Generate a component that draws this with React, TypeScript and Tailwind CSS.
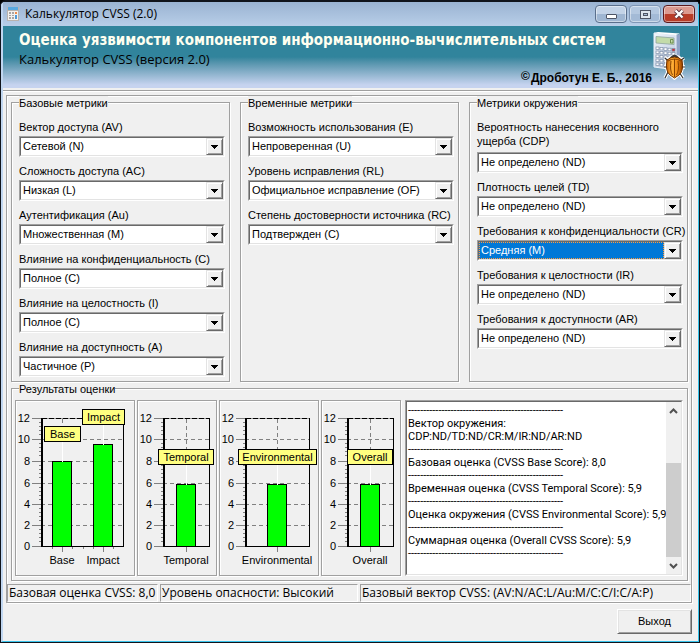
import React from 'react';

const groove = 'border border-[#a0a0a0] shadow-[1px_1px_0_#fff,inset_1px_1px_0_#fff]';
const sunken =
  'border border-t-[#a0a0a0] border-l-[#a0a0a0] border-r-white border-b-white';
const sunkenInner =
  'border border-t-[#696969] border-l-[#696969] border-r-[#e3e3e3] border-b-[#e3e3e3]';

type FieldProps = {
  id: string;
  label: string;
  value: string;
  focused?: boolean;
  tall?: boolean;
};

function Field({ id, label, value, focused, tall }: FieldProps) {
  return (
    <div className="flex flex-col">
      <label
        htmlFor={id}
        className={tall ? 'mb-1 leading-[14px]' : 'mb-0.5 whitespace-nowrap leading-[14px]'}
      >
        {label}
      </label>
      <div className={`relative ${sunken}`}>
        <div className={`flex bg-white ${sunkenInner}`}>
          <select
            id={id}
            defaultValue={value}
            className={`h-[17px] w-full appearance-none pr-5 leading-[15px] outline-none ${
              focused
                ? 'mr-[17px] border border-dotted border-[#ff9a3c] bg-[#0078d7] pl-px text-white'
                : 'bg-white pl-0.5 text-black'
            }`}
          >
            <option>{value}</option>
          </select>
        </div>
        <span className="pointer-events-none absolute top-px right-px flex h-[17px] w-[17px] items-center justify-center border border-t-[#e3e3e3] border-r-[#696969] border-b-[#696969] border-l-[#e3e3e3] bg-[#f0f0f0] shadow-[inset_1px_1px_0_#fff,inset_-1px_-1px_0_#a0a0a0]">
          <svg width="7" height="4" viewBox="0 0 7 4" shapeRendering="crispEdges">
            <path d="M0 0h7v1H0zM1 1h5v1H1zM2 2h3v1H2zM3 3h1v1H3z" />
          </svg>
        </span>
      </div>
    </div>
  );
}

function Group({
  title,
  className,
  children,
}: {
  title: string;
  className: string;
  children: React.ReactNode;
}) {
  return (
    <fieldset className={`min-w-0 ${groove} ${className}`}>
      <legend className="h-3 bg-[#f0f0f0] leading-[14px]">{title}</legend>
      {children}
    </fieldset>
  );
}

type Bar = { name: string; x: number; top: number; tagX: number; tagY: number; tagW: number };

const gridLines: [number, number][] = [
  [12, 418],
  [10, 439],
  [8, 461],
  [6, 483],
  [4, 504],
  [2, 525],
  [0, 546],
];

function Chart({
  left,
  width,
  axis,
  right,
  bars,
}: {
  left: number;
  width: number;
  axis: number;
  right: number;
  bars: Bar[];
}) {
  return (
    <div className={`shrink-0 ${groove}`}>
      <svg
        className="block"
        width={width}
        height="174"
        viewBox={`${left} 401 ${width} 174`}
        shapeRendering="crispEdges"
        fontSize="11"
      >
        {gridLines.map(([v, y]) => (
          <g key={v}>
            <path d={`M${axis - 9} ${y + 0.5}H${axis}`} stroke="#808080" />
            <path d={`M${axis} ${y + 0.5}H${right}`} stroke="#808080" strokeDasharray="4 3" />
            {v > 0 &&
              [4, 8, 12, 16].map((d) => (
                <path key={d} d={`M${axis - 2} ${y + d + 0.5}h2`} stroke="#808080" />
              ))}
            <text x={axis - 11} y={y + 4} textAnchor="end">
              {v}
            </text>
          </g>
        ))}
        {bars.map((b) => (
          <path
            key={b.name}
            d={`M${b.x + 10.5} 419V546`}
            stroke="#808080"
            strokeDasharray="4 3"
          />
        ))}
        <path d={`M${axis} 418.5H${right + 1}`} stroke="#000" />
        <path d={`M${axis + 6} 418.5H${right}`} stroke="#999" strokeDasharray="2 5" />
        <path d={`M${right + 0.5} 418V547`} stroke="#000" />
        <path d={`M${axis + 1} 418V547`} stroke="#000" strokeWidth="2" />
        <path d={`M${axis} 546.5H${right + 1}`} stroke="#000" />
        {bars.map((b) => (
          <g key={b.name}>
            <rect
              x={b.x + 0.5}
              y={b.top + 0.5}
              width="19"
              height={546 - b.top}
              fill="#0f0"
              stroke="#000"
            />
            <path d={`M${b.x + 10.5} 547v5`} stroke="#808080" />
            <path d={`M${b.x + 10.5} ${b.tagY + 15}V${b.top + 1}`} stroke="#fff" />
            <text x={b.x + 10} y="564" textAnchor="middle">
              {b.name}
            </text>
          </g>
        ))}
        {bars.length > 1 && (
          <path d="M52.500 547v2M72.500 547v2M83.500 547v2M93.500 547v2M113.500 547v2" stroke="#808080" />
        )}
        {bars.map((b) => (
          <g key={b.name}>
            <rect
              x={b.tagX + 0.5}
              y={b.tagY + 0.5}
              width={b.tagW - 1}
              height="15"
              fill="#ffff80"
              stroke="#000"
            />
            <text x={b.tagX + b.tagW / 2} y={b.tagY + 12} textAnchor="middle">
              {b.name}
            </text>
          </g>
        ))}
      </svg>
    </div>
  );
}

const rule = '-'.repeat(51);
const report = [
  rule,
  'Вектор окружения:',
  'CDP:ND/TD:ND/CR:M/IR:ND/AR:ND',
  rule,
  'Базовая оценка (CVSS Base Score): 8,0',
  rule,
  'Временная оценка (CVSS Temporal Score): 5,9',
  rule,
  'Оценка окружения (CVSS Environmental Score): 5,9',
  rule,
  'Суммарная оценка (Overall CVSS Score): 5,9',
  rule,
].join('\n');

function CalcIcon() {
  return (
    <svg width="12" height="14" viewBox="0 0 12 14" shapeRendering="crispEdges" aria-hidden="true">
      <rect x="0" y="0" width="12" height="14" fill="#b9b3ae" />
      <rect x="1" y="0" width="10" height="3" fill="#58a9e0" />
      <rect x="1" y="4" width="10" height="9" fill="#f4f1ee" />
      <path d="M2 5h2v2H2zM5 5h2v2H5zM2 8h2v1H2zM5 8h2v1H5zM2 10h2v2H2zM5 10h2v2H5z" fill="#a9a5a3" />
      <path d="M8 5h2v2H8z" fill="#ef8b4a" />
      <path d="M8 8h2v4H8z" fill="#4f9ad8" />
    </svg>
  );
}

function CalcBugIcon() {
  const keys: React.ReactNode[] = [];
  for (let r = 0; r < 5; r++) {
    for (let c = 0; c < 5; c++) {
      keys.push(
        <rect
          key={`${r}-${c}`}
          x={3 + c * 4}
          y={15 + r * 4 + c * 0.4}
          width="3"
          height="2.6"
          fill={r === 0 && c === 4 ? '#c8323c' : '#fff'}
          stroke="#7d8ea8"
          strokeWidth="0.7"
        />,
      );
    }
  }
  return (
    <svg width="34" height="48" viewBox="0 0 34 48" aria-hidden="true">
      <defs>
        <linearGradient id="bug" x1="0" x2="1">
          <stop offset="0" stopColor="#c45f00" />
          <stop offset="0.35" stopColor="#ffb13a" />
          <stop offset="0.7" stopColor="#ee8611" />
          <stop offset="1" stopColor="#8f3d00" />
        </linearGradient>
        <linearGradient id="body" x1="0" x2="0.6" y2="1">
          <stop offset="0" stopColor="#f3f7fc" />
          <stop offset="1" stopColor="#b9c8df" />
        </linearGradient>
      </defs>
      <path d="M23 3l4 -1v24l-4 10z" fill="#8fa3c6" />
      <path d="M1 1L23 3V38L1 35z" fill="url(#body)" stroke="#e9eff8" />
      <path d="M23 3l4 -1.500L5 0L1 1z" fill="#fff" />
      <path d="M3 4.500L21 6V12.500L3 11z" fill="#c3dba9" stroke="#8fa5a0" strokeWidth="0.8" />
      <path d="M17.500 7.500h2.500v3.500h-2.500z" fill="none" stroke="#5c7d3c" strokeWidth="0.8" />
      {keys}
      <g fill="none" stroke="#fff" strokeWidth="3.400">
        <path d="M15 29l-3 -3M27 29l4 -3M14 35h-3M28 35h4M15 40l-3 6M26 40l4 6" />
      </g>
      <path
        d="M14 27Q22 20 29 27Q32 39 26 43L21.500 47L17 43Q11 39 14 27z"
        fill="#fff"
        stroke="#fff"
        strokeWidth="2"
      />
      <g fill="none" stroke="#333" strokeWidth="1.200">
        <path d="M15 29l-3 -3M27 29l4 -3M14 35h-3M28 35h4M15 40l-3 6M26 40l4 6" />
      </g>
      <path d="M16.500 26q5 -7 10 0z" fill="#34383d" />
      <path d="M14 28Q21.500 22 29 28Q31 39 26 43L21.500 46L17 43Q12 39 14 28z" fill="url(#bug)" stroke="#6e3200" />
      <path
        d="M15 29Q21.500 25 28 29M21.500 27V45M18 29Q16.500 38 19.500 43M25 29Q26.500 38 23.500 43"
        fill="none"
        stroke="#8a4300"
      />
    </svg>
  );
}

const captionButton =
  'flex h-[18px] w-8 items-center justify-center rounded-sm border shadow-[inset_0_0_0_1px_rgba(255,255,255,0.45)]';

export default function App() {
  return (
    <div className="min-h-screen bg-black font-['Liberation_Sans',Arial,sans-serif] text-[11px] text-black">
      <div className="flex min-h-screen flex-col rounded-t-md border border-t-2 border-[#10141c] bg-[#b4cbe6]">
        <div className="flex grow flex-col rounded-t-sm border-r border-b border-l-2 border-r-[#38c4ec] border-b-[#38c4ec] border-l-[#c0d6f0]">
          <header className="flex h-6 items-center bg-linear-to-b from-[#9ab3d2] to-[#b8cee8] pr-[3px] pl-1">
            <CalcIcon />
            <h1 className="ml-1.5 grow font-['Open_Sans',sans-serif] text-xs">Калькулятор CVSS (2.0)</h1>
            <div className="flex gap-0.5">
              <button
                type="button"
                aria-label="Свернуть"
                className={`${captionButton} border-[#5a6f8c] bg-linear-to-b from-[#c3d3e7] from-50% to-[#9fb6d2] to-50%`}
              >
                <svg width="11" height="5" viewBox="0 0 11 5" className="mt-1">
                  <rect x="0.500" y="0.500" width="10" height="4" rx="0.500" fill="#fff" stroke="#4d5566" />
                </svg>
              </button>
              <button
                type="button"
                aria-label="Развернуть"
                className={`${captionButton} border-[#7f96b5] bg-linear-to-b from-[#b4c8e0] from-50% to-[#a3bad6] to-50%`}
              >
                <svg width="11" height="9" viewBox="0 0 11 9" shapeRendering="crispEdges">
                  <rect x="0.500" y="0.500" width="10" height="8" fill="#dde5ef" stroke="#4d5566" />
                  <rect x="3.500" y="3.500" width="4" height="2" fill="#a9bdd8" stroke="#4d5566" />
                </svg>
              </button>
              <button
                type="button"
                aria-label="Закрыть"
                className={`${captionButton} border-[#5b1a1e] bg-linear-to-b from-[#dc9a90] from-50% to-[#b83c28] to-50%`}
              >
                <svg width="12" height="10" viewBox="0 0 12 10">
                  <path d="M2.500 1.500L9.500 8.500M9.500 1.500L2.500 8.500" stroke="#5a3540" strokeWidth="4" />
                  <path d="M2.500 1.500L9.500 8.500M9.500 1.500L2.500 8.500" stroke="#fff" strokeWidth="2.400" />
                </svg>
              </button>
            </div>
          </header>

          <section className="flex h-[62px] bg-linear-to-b from-[#31849c] from-50% to-[#c6d3ef] to-95% pl-4">
            <div className="flex grow flex-col pt-1 font-['Open_Sans',sans-serif]">
              <h2 className="font-['DejaVu_Sans_Condensed','DejaVu_Sans',sans-serif] text-[15px] leading-5 font-bold whitespace-nowrap text-[#fffff0]">
                Оценка уязвимости компонентов информационно-вычислительных систем
              </h2>
              <p className="text-[13px] leading-[18px]">Калькулятор CVSS (версия 2.0)</p>
              <p className="mt-px flex items-start justify-end pr-px font-['Liberation_Sans',Arial,sans-serif] text-xs leading-[18px] font-bold">
                <span className="pr-px leading-[14px]">©</span>
                Дроботун Е. Б., 2016
              </p>
            </div>
            <div className="mr-[11px] pt-1.5">
              <CalcBugIcon />
            </div>
          </section>

          <main className="flex grow flex-col bg-[#f0f0f0]">
            <div className="mt-0.5 h-0.5 border-t border-[#a0a0a0] bg-white" />
            <div className={`mt-[3px] mr-1.5 ml-[3px] ${groove}`}>
              <div className="grid grid-cols-3 gap-2.5 pr-[3px] pl-1">
                <Group title="Базовые метрики" className="pt-3 pr-1 pb-1 pl-[7px]">
                  <div className="flex flex-col gap-[7px]">
                    <Field id="av" label="Вектор доступа (AV)" value="Сетевой (N)" />
                    <Field id="ac" label="Сложность доступа (AC)" value="Низкая (L)" />
                    <Field id="au" label="Аутентификация (Au)" value="Множественная (M)" />
                    <Field id="c" label="Влияние на конфиденциальность (C)" value="Полное (C)" />
                    <Field id="i" label="Влияние на целостность (I)" value="Полное (C)" />
                    <Field id="a" label="Влияние на доступность (A)" value="Частичное (P)" />
                  </div>
                </Group>
                <Group title="Временные метрики" className="pt-3 pr-1 pb-1 pl-[7px]">
                  <div className="flex flex-col gap-[7px]">
                    <Field id="e" label="Возможность использования (E)" value="Непроверенная (U)" />
                    <Field id="rl" label="Уровень исправления (RL)" value="Официальное исправление (OF)" />
                    <Field id="rc" label="Степень достоверности источника (RC)" value="Подтвержден (C)" />
                  </div>
                </Group>
                <Group title="Метрики окружения" className="pt-3 pr-1 pb-1 pl-[7px]">
                  <div className="flex flex-col gap-[7px]">
                    <Field
                      id="cdp"
                      label="Вероятность нанесения косвенного ущерба (CDP)"
                      value="Не определено (ND)"
                      tall
                    />
                    <Field id="td" label="Плотность целей (TD)" value="Не определено (ND)" />
                    <Field id="cr" label="Требования к конфиденциальности (CR)" value="Средняя (M)" focused />
                    <Field id="ir" label="Требования к целостности (IR)" value="Не определено (ND)" />
                    <Field id="ar" label="Требования к доступности (AR)" value="Не определено (ND)" />
                  </div>
                </Group>
              </div>

              <div className="pr-[3px] pl-1">
                <Group title="Результаты оценки" className="pt-1.5 pr-1 pb-1 pl-[7px]">
                  <div className="-ml-1 flex gap-0.5">
                    <Chart
                      left={16}
                      width={118}
                      axis={41}
                      right={123}
                      bars={[
                        { name: 'Base', x: 52, top: 461, tagX: 44, tagY: 426, tagW: 37 },
                        { name: 'Impact', x: 93, top: 444, tagX: 82, tagY: 409, tagW: 43 },
                      ]}
                    />
                    <Chart
                      left={138}
                      width={78}
                      axis={163}
                      right={209}
                      bars={[{ name: 'Temporal', x: 176, top: 484, tagX: 158, tagY: 449, tagW: 56 }]}
                    />
                    <Chart
                      left={220}
                      width={98}
                      axis={245}
                      right={309}
                      bars={[{ name: 'Environmental', x: 267, top: 484, tagX: 238, tagY: 449, tagW: 79 }]}
                    />
                    <Chart
                      left={322}
                      width={78}
                      axis={347}
                      right={393}
                      bars={[{ name: 'Overall', x: 360, top: 484, tagX: 347, tagY: 449, tagW: 46 }]}
                    />
                    <div className={`ml-0.5 flex min-w-0 grow ${sunken}`}>
                      <div className={`flex min-w-0 grow bg-white ${sunkenInner}`}>
                        <textarea
                          readOnly
                          aria-label="Отчёт"
                          value={report}
                          className="min-w-0 grow resize-none overflow-hidden bg-white pt-0.5 pl-px font-[Roboto,sans-serif] leading-[13px] whitespace-pre outline-none"
                        />
                        <div className="flex w-[15px] shrink-0 flex-col items-center bg-[#f0f0f0]">
                          <svg width="15" height="17" viewBox="0 0 15 17">
                            <path d="M4 11l3.500 -3.500L11 11" fill="none" stroke="#505050" strokeWidth="2" />
                          </svg>
                          <div className="grow" />
                          <div className="h-[94px] w-full bg-[#cdcdcd]" />
                          <svg width="15" height="17" viewBox="0 0 15 17">
                            <path d="M4 7l3.500 3.500L11 7" fill="none" stroke="#505050" strokeWidth="2" />
                          </svg>
                        </div>
                      </div>
                    </div>
                  </div>
                </Group>
              </div>

              <footer className="mt-[3px] flex gap-0.5 font-['Open_Sans',sans-serif] text-xs leading-4 whitespace-nowrap">
                <div className={`w-[151px] pl-px ${sunken}`}>Базовая оценка CVSS: 8,0</div>
                <div className={`w-[198px] pl-px ${sunken}`}>Уровень опасности: Высокий</div>
                <div className={`grow pl-px ${sunken}`}>Базовый вектор CVSS: (AV:N/AC:L/Au:M/C:C/I:C/A:P)</div>
              </footer>
            </div>

            <div className="flex justify-end pt-1.5 pr-1.5 pb-1">
              <button
                type="button"
                className="h-[25px] w-[75px] border border-t-white border-r-[#696969] border-b-[#696969] border-l-white text-[11px] shadow-[inset_1px_1px_0_#e3e3e3,inset_-1px_-1px_0_#a0a0a0]"
              >
                Выход
              </button>
            </div>
          </main>
        </div>
      </div>
    </div>
  );
}
